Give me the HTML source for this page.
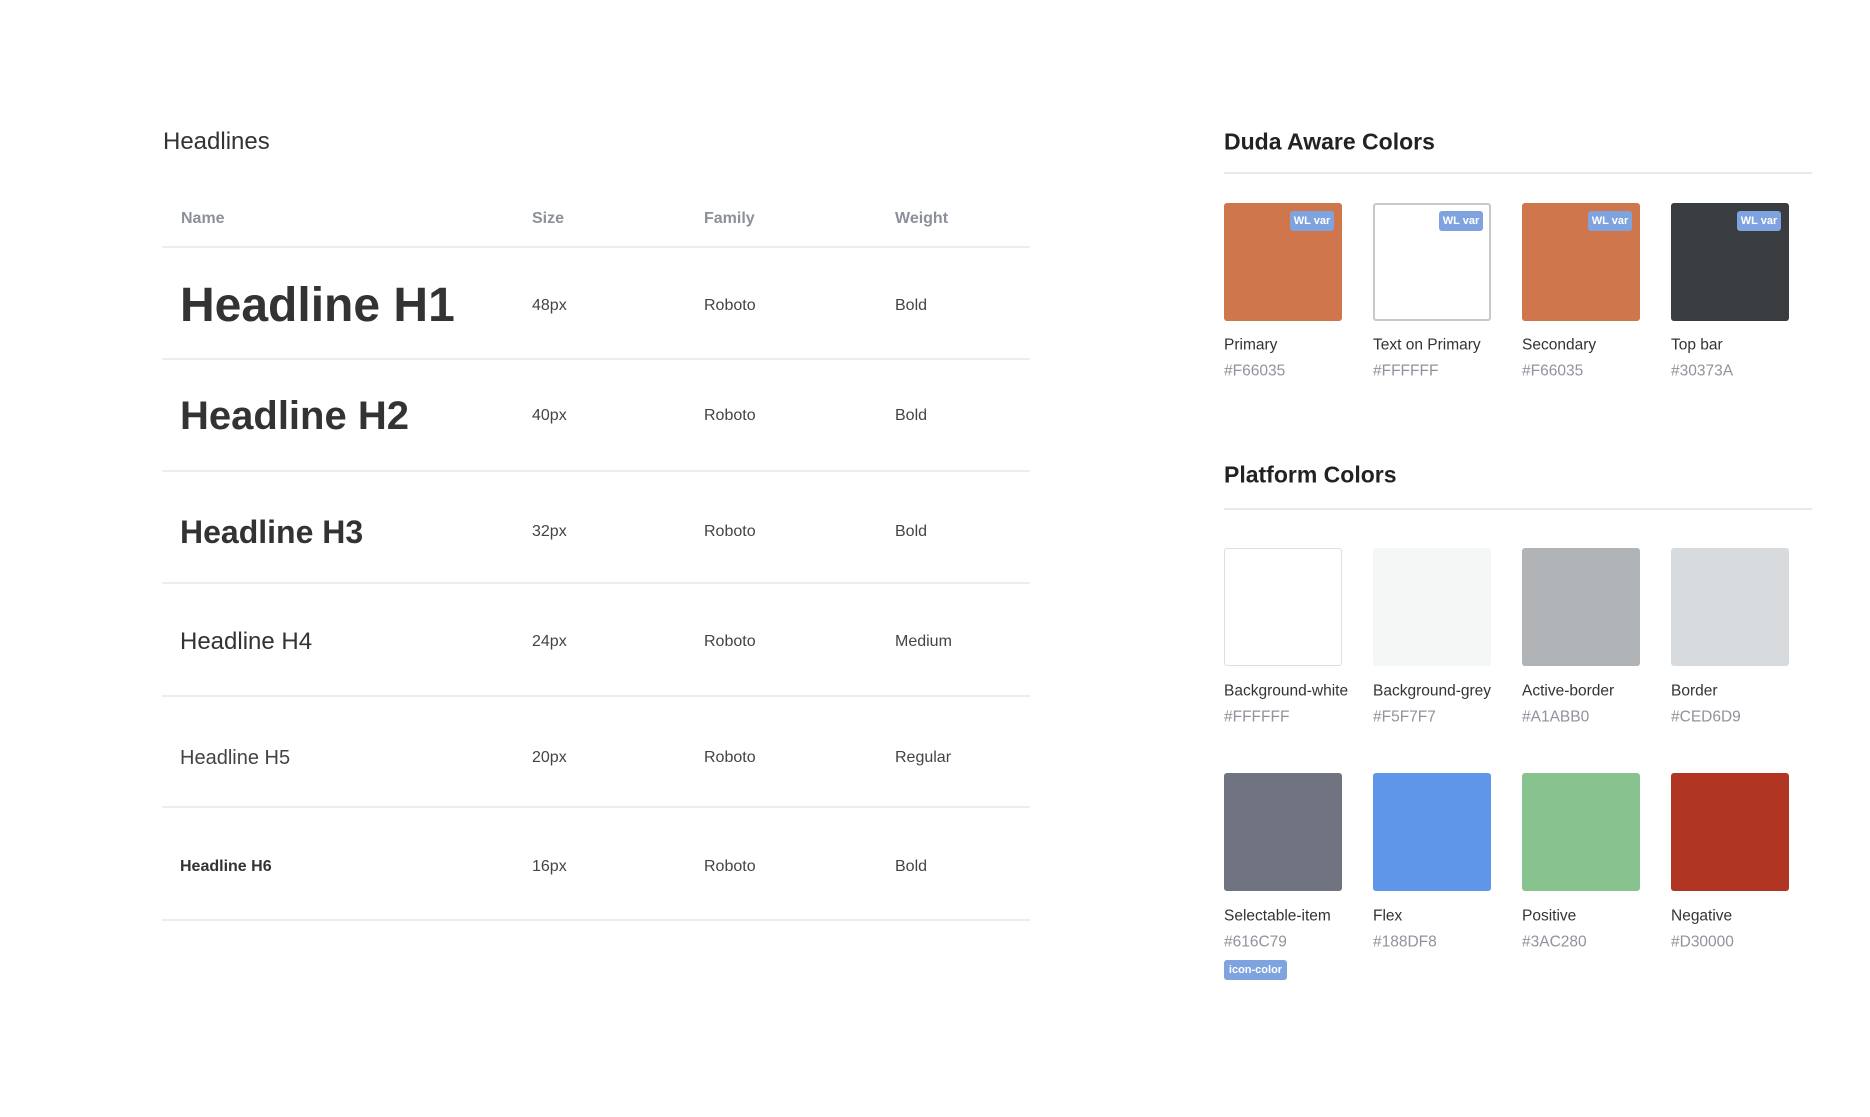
<!DOCTYPE html>
<html><head><meta charset="utf-8"><style>
*{margin:0;padding:0;box-sizing:border-box}
body{width:1870px;height:1117px;background:#fff;position:relative;font-family:"Liberation Sans",sans-serif;color:#333;overflow:hidden}
.a{position:absolute;white-space:nowrap;line-height:1}
.t{transform:translateY(-50%)}
.hl{position:absolute;left:162px;width:868px;height:2px;background:#ebedee}
.rl{position:absolute;left:1224px;width:588px;height:2px;background:#e6e8ea}
.v{font-size:16px;color:#444}
.th{font-size:16px;color:#8b909a;font-weight:bold}
.sw{position:absolute;width:118px;height:118px;border-radius:3px}
.lb{font-size:15.5px;color:#333}
.hx{font-size:15.5px;color:#8f939b}
.wl{position:absolute;right:8px;top:8px;width:44px;height:20px;border-radius:3px;background:#7ea3df;color:#fff;font-size:11px;font-weight:bold;text-align:center;line-height:20px}
.c1{left:532px}.c2{left:704px}.c3{left:895px}
</style></head><body>
<div class="a t" style="left:163px;top:142px;font-size:24px;color:#333">Headlines</div>
<div class="a t th" style="left:181px;top:219px">Name</div>
<div class="a t th c1" style="top:219px">Size</div>
<div class="a t th c2" style="top:219px">Family</div>
<div class="a t th c3" style="top:219px">Weight</div>
<div class="hl" style="top:246px"></div>

<div class="a t" style="left:180px;top:306px;font-size:48px;font-weight:bold;color:#333">Headline H1</div>
<div class="a t v c1" style="top:306px">48px</div><div class="a t v c2" style="top:306px">Roboto</div><div class="a t v c3" style="top:306px">Bold</div>
<div class="hl" style="top:358px"></div>

<div class="a t" style="left:180px;top:416px;font-size:40px;font-weight:bold">Headline H2</div>
<div class="a t v c1" style="top:416px">40px</div><div class="a t v c2" style="top:416px">Roboto</div><div class="a t v c3" style="top:416px">Bold</div>
<div class="hl" style="top:470px"></div>

<div class="a t" style="left:180px;top:532px;font-size:32px;font-weight:bold">Headline H3</div>
<div class="a t v c1" style="top:532px">32px</div><div class="a t v c2" style="top:532px">Roboto</div><div class="a t v c3" style="top:532px">Bold</div>
<div class="hl" style="top:582px"></div>

<div class="a t" style="left:180px;top:642px;font-size:24px;color:#333">Headline H4</div>
<div class="a t v c1" style="top:642px">24px</div><div class="a t v c2" style="top:642px">Roboto</div><div class="a t v c3" style="top:642px">Medium</div>
<div class="hl" style="top:695px"></div>

<div class="a t" style="left:180px;top:758px;font-size:20px;color:#444">Headline H5</div>
<div class="a t v c1" style="top:758px">20px</div><div class="a t v c2" style="top:758px">Roboto</div><div class="a t v c3" style="top:758px">Regular</div>
<div class="hl" style="top:806px"></div>

<div class="a t" style="left:180px;top:867px;font-size:16px;font-weight:bold">Headline H6</div>
<div class="a t v c1" style="top:867px">16px</div><div class="a t v c2" style="top:867px">Roboto</div><div class="a t v c3" style="top:867px">Bold</div>
<div class="hl" style="top:919px"></div>

<div class="a t" style="left:1224px;top:142px;font-size:23px;font-weight:bold;color:#222">Duda Aware Colors</div>
<div class="rl" style="top:172px"></div>
<div class="sw" style="left:1224px;top:203px;background:#d0764c"><div class="wl">WL var</div></div>
<div class="sw" style="left:1373px;top:203px;background:#fff;border:2px solid #c6c8cc"><div class="wl" style="right:6px;top:6px">WL var</div></div>
<div class="sw" style="left:1522px;top:203px;background:#d0764c"><div class="wl">WL var</div></div>
<div class="sw" style="left:1671px;top:203px;background:#3a3d40"><div class="wl">WL var</div></div>
<div class="a t lb" style="left:1224px;top:345px">Primary</div><div class="a t hx" style="left:1224px;top:371px">#F66035</div>
<div class="a t lb" style="left:1373px;top:345px">Text on Primary</div><div class="a t hx" style="left:1373px;top:371px">#FFFFFF</div>
<div class="a t lb" style="left:1522px;top:345px">Secondary</div><div class="a t hx" style="left:1522px;top:371px">#F66035</div>
<div class="a t lb" style="left:1671px;top:345px">Top bar</div><div class="a t hx" style="left:1671px;top:371px">#30373A</div>

<div class="a t" style="left:1224px;top:475px;font-size:23px;font-weight:bold;color:#222">Platform Colors</div>
<div class="rl" style="top:508px"></div>
<div class="sw" style="left:1224px;top:548px;background:#fff;border:1px solid #dcdee1"></div>
<div class="sw" style="left:1373px;top:548px;background:#f5f7f7"></div>
<div class="sw" style="left:1522px;top:548px;background:#b0b4b7"></div>
<div class="sw" style="left:1671px;top:548px;background:#d8dbde"></div>
<div class="a t lb" style="left:1224px;top:691px">Background-white</div><div class="a t hx" style="left:1224px;top:717px">#FFFFFF</div>
<div class="a t lb" style="left:1373px;top:691px">Background-grey</div><div class="a t hx" style="left:1373px;top:717px">#F5F7F7</div>
<div class="a t lb" style="left:1522px;top:691px">Active-border</div><div class="a t hx" style="left:1522px;top:717px">#A1ABB0</div>
<div class="a t lb" style="left:1671px;top:691px">Border</div><div class="a t hx" style="left:1671px;top:717px">#CED6D9</div>

<div class="sw" style="left:1224px;top:773px;background:#6f7480"></div>
<div class="sw" style="left:1373px;top:773px;background:#5f96ea"></div>
<div class="sw" style="left:1522px;top:773px;background:#88c28f"></div>
<div class="sw" style="left:1671px;top:773px;background:#b03522"></div>
<div class="a t lb" style="left:1224px;top:916px">Selectable-item</div><div class="a t hx" style="left:1224px;top:942px">#616C79</div>
<div class="a t lb" style="left:1373px;top:916px">Flex</div><div class="a t hx" style="left:1373px;top:942px">#188DF8</div>
<div class="a t lb" style="left:1522px;top:916px">Positive</div><div class="a t hx" style="left:1522px;top:942px">#3AC280</div>
<div class="a t lb" style="left:1671px;top:916px">Negative</div><div class="a t hx" style="left:1671px;top:942px">#D30000</div>
<div class="a" style="left:1224px;top:960px;width:63px;height:20px;border-radius:3px;background:#7ea3df;color:#fff;font-size:11px;font-weight:bold;text-align:center;line-height:20px">icon-color</div>
</body></html>
